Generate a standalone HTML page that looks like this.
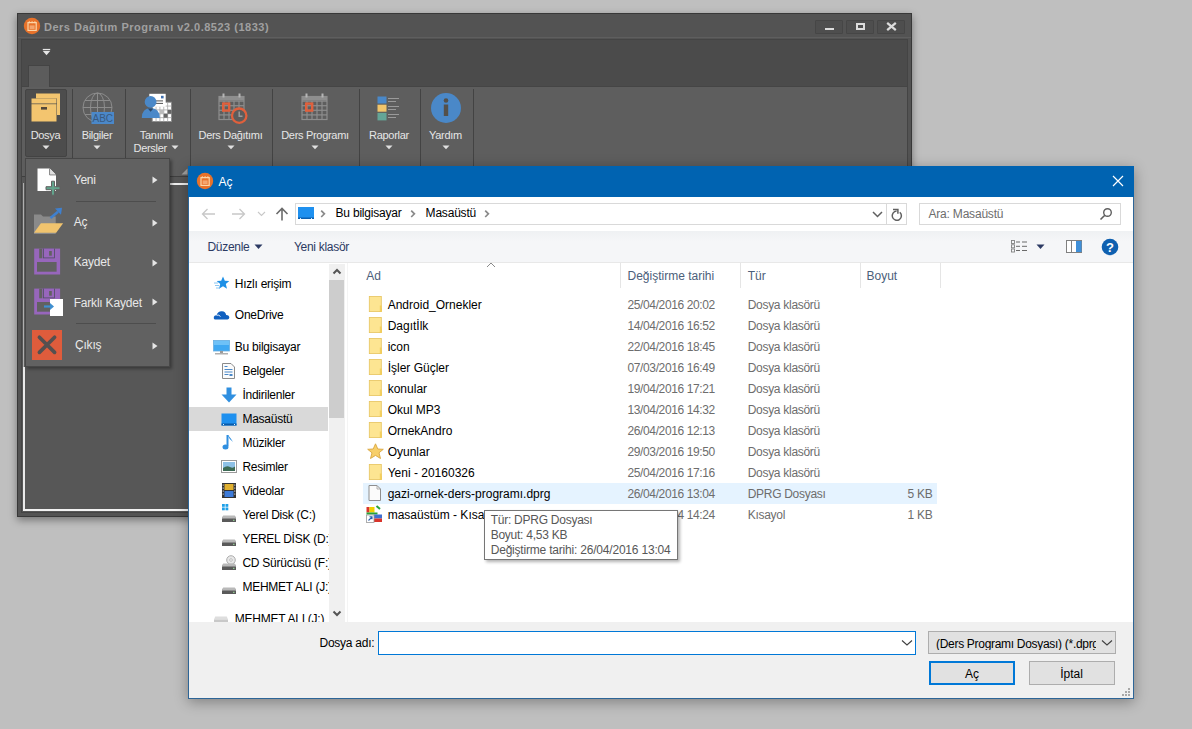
<!DOCTYPE html>
<html><head><meta charset="utf-8"><style>
html,body{margin:0;padding:0;width:1192px;height:729px;overflow:hidden;background:#bfbfbf;font-family:"Liberation Sans",sans-serif}
.a{position:absolute}
.t{white-space:nowrap}
svg{overflow:visible}
</style></head><body>
<div class="a" style="left:17px;top:13px;width:895px;height:504px;background:#535353;border:1px solid #383838;box-sizing:border-box;box-shadow:0 3px 8px rgba(0,0,0,.4)"></div>
<svg class="a" style="left:23px;top:17px" width="18" height="18" viewBox="0 0 18 18"><circle cx="9" cy="9" r="8.2" fill="#e8722a"/><rect x="5" y="5.6" width="8.2" height="7.8" fill="none" stroke="#fbd5a8" stroke-width="1.2"/><g fill="#fbd5a8"><rect x="5.8" y="4.2" width="1" height="2"/><rect x="8.6" y="4.2" width="1" height="2"/><rect x="11.4" y="4.2" width="1" height="2"/></g><rect x="6.6" y="8.4" width="5" height="3.6" fill="#f4a56e"/></svg>
<div class="a t" style="left:44px;top:22.49px;font-size:11px;line-height:11px;color:#a0a0a0;font-weight:bold;letter-spacing:0.5px">Ders Dağıtım Programı v2.0.8523 (1833)</div>
<div class="a" style="left:815px;top:20px;width:28px;height:14px;background:#4e4e4e;border:1px solid #464646;box-sizing:border-box;border-radius:1px"></div>
<div class="a" style="left:846px;top:20px;width:28px;height:14px;background:#4e4e4e;border:1px solid #464646;box-sizing:border-box;border-radius:1px"></div>
<div class="a" style="left:877px;top:20px;width:28px;height:14px;background:#4e4e4e;border:1px solid #464646;box-sizing:border-box;border-radius:1px"></div>
<div class="a" style="left:825px;top:28px;width:9px;height:2px;background:#dcdcdc"></div>
<div class="a" style="left:856px;top:23px;width:9px;height:7px;border:2px solid #dcdcdc;box-sizing:border-box"></div>
<svg class="a" style="left:886px;top:22px" width="11" height="9" viewBox="0 0 11 9"><path d="M1.2 0.8 L9.8 8.2 M9.8 0.8 L1.2 8.2" stroke="#dcdcdc" stroke-width="2.2"/></svg>
<div class="a" style="left:21px;top:39px;width:887px;height:474px;background:#575757;border:1px solid #444;box-sizing:border-box"></div>
<div class="a" style="left:22px;top:40px;width:885px;height:47px;background:#4b4b4b"></div>
<div class="a" style="left:18px;top:37px;width:893px;height:1px;background:#5e5e5e"></div>
<div class="a" style="left:22px;top:86px;width:885px;height:1px;background:#454545"></div>
<svg class="a" style="left:42px;top:48px" width="11" height="9" viewBox="0 0 11 9"><rect x="0.8" y="0.9" width="7.4" height="1.3" fill="#e6e6e6"/><path d="M0.8 3.1 L8.2 3.1 L4.5 7.2 Z" fill="#e6e6e6"/></svg>
<div class="a" style="left:28px;top:65px;width:22px;height:22px;background:#5c5c5c;border:1px solid #444;border-bottom:none;box-sizing:border-box"></div>
<div class="a" style="left:22px;top:87px;width:885px;height:89px;background:#5e5e5e"></div>
<div class="a" style="left:22px;top:176px;width:885px;height:1px;background:#404040"></div>
<div class="a" style="left:72px;top:89px;width:1px;height:88px;background:#434343"></div>
<div class="a" style="left:125px;top:89px;width:1px;height:88px;background:#434343"></div>
<div class="a" style="left:190px;top:89px;width:1px;height:88px;background:#434343"></div>
<div class="a" style="left:272px;top:89px;width:1px;height:88px;background:#434343"></div>
<div class="a" style="left:359px;top:89px;width:1px;height:88px;background:#434343"></div>
<div class="a" style="left:420px;top:89px;width:1px;height:88px;background:#434343"></div>
<div class="a" style="left:473px;top:89px;width:1px;height:88px;background:#434343"></div>
<div class="a" style="left:25px;top:89px;width:42px;height:68px;background:#4d4d4d;border:1px solid #444;box-sizing:border-box;border-radius:2px"></div>
<div class="a" style="left:23px;top:183px;width:2px;height:328px;background:#eaeaea"></div>
<div class="a" style="left:23px;top:509px;width:885px;height:2px;background:#f2f2f2"></div>
<div class="a" style="left:25px;top:183px;width:883px;height:2px;background:#f0f0f0"></div>
<svg class="a" style="left:181px;top:168px" width="8" height="8" viewBox="0 0 8 8"><path d="M6.5 0.5 L6.5 6.5 L0.5 6.5 Z" fill="#a0a0a0"/></svg>
<svg class="a" style="left:31px;top:93px" width="30" height="29" viewBox="0 0 30 29"><rect x="5" y="0.5" width="24" height="5" fill="#f3c56f"/><rect x="26" y="5" width="3" height="17" fill="#f3c56f"/><rect x="0.5" y="5.5" width="25" height="5" fill="#f3c56f"/><rect x="0.5" y="11.2" width="25" height="17.3" fill="#f3c56f"/><rect x="10" y="14" width="6" height="2.6" fill="#54483a"/></svg>
<div class="a t" style="left:-54.50px;top:130.39px;width:200px;text-align:center;font-size:11px;line-height:11px;color:#e6e6e6;letter-spacing:-0.3px">Dosya</div>
<svg class="a" style="left:41.5px;top:145px" width="8" height="5" viewBox="0 0 8 5"><path d="M0.5 0.5 L7.5 0.5 L4 4.2 Z" fill="#e0e0e0"/></svg>
<svg class="a" style="left:82px;top:92px" width="33" height="33" viewBox="0 0 33 33"><g fill="none" stroke="#8c8c8c" stroke-width="1"><circle cx="15.5" cy="15.5" r="14.5"/><ellipse cx="15.5" cy="15.5" rx="7" ry="14.5"/><line x1="15.5" y1="1" x2="15.5" y2="30"/><line x1="1" y1="15.5" x2="30" y2="15.5"/><line x1="3" y1="8.5" x2="28" y2="8.5"/><line x1="3" y1="22.5" x2="28" y2="22.5"/></g><rect x="9.5" y="20" width="22.5" height="12" fill="#4b88c9"/><text x="20.8" y="30" font-family="Liberation Sans" font-size="10" fill="#3a5a80" text-anchor="middle">ABC</text></svg>
<div class="a t" style="left:-3.00px;top:130.39px;width:200px;text-align:center;font-size:11px;line-height:11px;color:#e6e6e6;letter-spacing:-0.3px">Bilgiler</div>
<svg class="a" style="left:93px;top:145px" width="8" height="5" viewBox="0 0 8 5"><path d="M0.5 0.5 L7.5 0.5 L4 4.2 Z" fill="#e0e0e0"/></svg>
<svg class="a" style="left:141px;top:93px" width="32" height="30" viewBox="0 0 32 30"><rect x="11.2" y="9.2" width="19.3" height="19.3" fill="#fff" stroke="#8a8a8a" stroke-width="0.9"/><g stroke="#a8a8a8" stroke-width="0.8"><line x1="15.06" y1="9.2" x2="15.06" y2="28.5"/><line x1="11.2" y1="13.06" x2="30.5" y2="13.06"/><line x1="18.92" y1="9.2" x2="18.92" y2="28.5"/><line x1="11.2" y1="16.92" x2="30.5" y2="16.92"/><line x1="22.78" y1="9.2" x2="22.78" y2="28.5"/><line x1="11.2" y1="20.78" x2="30.5" y2="20.78"/><line x1="26.64" y1="9.2" x2="26.64" y2="28.5"/><line x1="11.2" y1="24.64" x2="30.5" y2="24.64"/></g><g fill="#666"><rect x="26.6" y="16.9" width="3.9" height="3.9"/><rect x="22.7" y="20.8" width="3.9" height="3.9"/><rect x="18.9" y="16.9" width="3.9" height="3.9" fill="#bbb"/></g><rect x="8.3" y="0.8" width="16.4" height="13" fill="#fff"/><rect x="20" y="2.8" width="2.6" height="2.6" fill="#3d6fb0"/><rect x="13.5" y="7.4" width="8.5" height="1" fill="#555"/><rect x="13.5" y="9.9" width="8.5" height="1" fill="#555"/><circle cx="9.6" cy="8.9" r="5.9" fill="#4a88c8"/><path d="M0.8 25 Q0.8 15.3 9.6 15.3 Q18.8 15.3 18.8 25 Z" fill="#4a88c8"/><path d="M6.8 15.6 L9.6 18.8 L12.4 15.6 Z" fill="#2d4a6a"/></svg>
<div class="a t" style="left:56.50px;top:130.39px;width:200px;text-align:center;font-size:11px;line-height:11px;color:#e6e6e6;letter-spacing:-0.3px">Tanımlı</div>
<div class="a t" style="left:133.5px;top:143.09px;font-size:11px;line-height:11px;color:#e6e6e6;letter-spacing:-0.3px">Dersler</div>
<svg class="a" style="left:170.5px;top:145px" width="8" height="5" viewBox="0 0 8 5"><path d="M0.5 0.5 L7.5 0.5 L4 4.2 Z" fill="#e0e0e0"/></svg>
<svg class="a" style="left:218px;top:93px" width="32" height="32" viewBox="0 0 32 32"><g fill="none" stroke="#8e8e8e" stroke-width="1.2"><rect x="1" y="3.5" width="25" height="23"/><line x1="1" y1="8.1" x2="26" y2="8.1"/><line x1="1" y1="12.7" x2="26" y2="12.7"/><line x1="1" y1="17.3" x2="26" y2="17.3"/><line x1="1" y1="21.9" x2="26" y2="21.9"/><line x1="6.0" y1="8" x2="6.0" y2="26.5"/><line x1="11.0" y1="8" x2="11.0" y2="26.5"/><line x1="16.0" y1="8" x2="16.0" y2="26.5"/><line x1="21.0" y1="8" x2="21.0" y2="26.5"/></g><rect x="1" y="3" width="25" height="4.5" fill="#8e8e8e"/><rect x="4.5" y="0.5" width="2" height="4" fill="#b5b5b5"/><rect x="20.5" y="0.5" width="2" height="4" fill="#b5b5b5"/><rect x="5.2" y="10.6" width="6" height="7" fill="none" stroke="#e0603c" stroke-width="2.4"/><circle cx="21.2" cy="22.7" r="7.2" fill="#5c5c5c" stroke="#e0603c" stroke-width="2.3"/><path d="M21.2 18.5 L21.2 23.2 L24.5 23.2" fill="none" stroke="#9a9a9a" stroke-width="1.5"/></svg>
<div class="a t" style="left:130.50px;top:130.39px;width:200px;text-align:center;font-size:11px;line-height:11px;color:#e6e6e6;letter-spacing:-0.3px">Ders Dağıtımı</div>
<svg class="a" style="left:226.5px;top:145px" width="8" height="5" viewBox="0 0 8 5"><path d="M0.5 0.5 L7.5 0.5 L4 4.2 Z" fill="#e0e0e0"/></svg>
<svg class="a" style="left:301px;top:93px" width="32" height="32" viewBox="0 0 32 32"><g fill="none" stroke="#8e8e8e" stroke-width="1.2"><rect x="1" y="3.5" width="25" height="23"/><line x1="1" y1="8.1" x2="26" y2="8.1"/><line x1="1" y1="12.7" x2="26" y2="12.7"/><line x1="1" y1="17.3" x2="26" y2="17.3"/><line x1="1" y1="21.9" x2="26" y2="21.9"/><line x1="6.0" y1="8" x2="6.0" y2="26.5"/><line x1="11.0" y1="8" x2="11.0" y2="26.5"/><line x1="16.0" y1="8" x2="16.0" y2="26.5"/><line x1="21.0" y1="8" x2="21.0" y2="26.5"/></g><rect x="1" y="3" width="25" height="4.5" fill="#8e8e8e"/><rect x="4.5" y="0.5" width="2" height="4" fill="#b5b5b5"/><rect x="20.5" y="0.5" width="2" height="4" fill="#b5b5b5"/><rect x="5.2" y="10.6" width="6" height="7" fill="none" stroke="#e0603c" stroke-width="2.4"/></svg>
<div class="a t" style="left:215.00px;top:130.39px;width:200px;text-align:center;font-size:11px;line-height:11px;color:#e6e6e6;letter-spacing:-0.3px">Ders Programı</div>
<svg class="a" style="left:310.6px;top:145px" width="8" height="5" viewBox="0 0 8 5"><path d="M0.5 0.5 L7.5 0.5 L4 4.2 Z" fill="#e0e0e0"/></svg>
<svg class="a" style="left:377px;top:96px" width="23" height="25" viewBox="0 0 23 25"><rect x="0.5" y="0.5" width="9" height="7" fill="#4a88c8"/><rect x="0.5" y="8.7" width="9" height="7" fill="#f1c56b"/><rect x="0.5" y="16.9" width="9" height="7.5" fill="#64a597"/><g fill="#9a9a9a"><rect x="11" y="2" width="11" height="1"/><rect x="11" y="5" width="8" height="1"/><rect x="11" y="10" width="11" height="1"/><rect x="11" y="13" width="8" height="1"/><rect x="11" y="18" width="11" height="1"/><rect x="11" y="21" width="8" height="1"/></g></svg>
<div class="a t" style="left:289.00px;top:130.39px;width:200px;text-align:center;font-size:11px;line-height:11px;color:#e6e6e6;letter-spacing:-0.3px">Raporlar</div>
<svg class="a" style="left:384.6px;top:145px" width="8" height="5" viewBox="0 0 8 5"><path d="M0.5 0.5 L7.5 0.5 L4 4.2 Z" fill="#e0e0e0"/></svg>
<svg class="a" style="left:430px;top:92px" width="32" height="32" viewBox="0 0 32 32"><circle cx="16" cy="16" r="15" fill="#4a88c8"/><circle cx="16" cy="8.5" r="2.3" fill="#54504a"/><rect x="13.8" y="12.5" width="4.4" height="11.5" fill="#54504a"/></svg>
<div class="a t" style="left:345.50px;top:130.39px;width:200px;text-align:center;font-size:11px;line-height:11px;color:#e6e6e6;letter-spacing:-0.3px">Yardım</div>
<svg class="a" style="left:441.7px;top:145px" width="8" height="5" viewBox="0 0 8 5"><path d="M0.5 0.5 L7.5 0.5 L4 4.2 Z" fill="#e0e0e0"/></svg>
<div class="a" style="left:23px;top:183px;width:1px;height:184px;background:#b0b0b0"></div>
<div class="a" style="left:24px;top:183px;width:1px;height:184px;background:#5c5c5c"></div>
<div class="a" style="left:25px;top:158px;width:145px;height:209px;background:#616161;border:1px solid #474747;box-sizing:border-box;box-shadow:2px 2px 3px rgba(0,0,0,.35)"></div>
<svg class="a" style="left:37px;top:168px" width="28" height="28" viewBox="0 0 28 28"><path d="M0.5 0.5 L12.8 0.5 L19 6.7 L19 23 L0.5 23 Z" fill="#fff"/><path d="M13.2 1.2 L13.2 6.3 L18.4 6.3 Z" fill="#e0e0e0"/><path d="M12.6 0.5 L12.6 6.9 L19 6.9" fill="none" stroke="#616161" stroke-width="0.8"/><path d="M14.5 13.2 L17.5 13.2 L17.5 18.7 L23 18.7 L23 21.7 L17.5 21.7 L17.5 27.2 L14.5 27.2 L14.5 21.7 L9 21.7 L9 18.7 L14.5 18.7 Z" fill="#62a38c" stroke="#616161" stroke-width="1"/></svg>
<div class="a t" style="left:73.7px;top:174.04px;font-size:12px;line-height:12px;color:#e8e8e8;letter-spacing:-0.2px">Yeni</div>
<svg class="a" style="left:152px;top:175.6px" width="6" height="8" viewBox="0 0 6 8"><path d="M0.5 0.5 L5.5 4 L0.5 7.5 Z" fill="#e6e6e6"/></svg>
<div class="a" style="left:76px;top:201px;width:80px;height:1px;background:#4d4d4d"></div>
<svg class="a" style="left:33px;top:207px" width="32" height="30" viewBox="0 0 32 30"><path d="M1 7.5 L8 7.5 L10 9.5 L22.7 9.5 L22.7 27 L1 27 Z" fill="#8a8a8a"/><path d="M7.9 16.3 L30.1 16.3 L23.2 25.7 L1 25.7 Z" fill="#f1c46e"/><path d="M17.5 11 L25 4.8" stroke="#3f80cf" stroke-width="2.6"/><path d="M22 1.6 L29 0.8 L28 7.8 Z" fill="#3f80cf"/></svg>
<div class="a t" style="left:73.7px;top:216.34px;font-size:12px;line-height:12px;color:#e8e8e8;letter-spacing:-0.2px">Aç</div>
<svg class="a" style="left:152px;top:218.8px" width="6" height="8" viewBox="0 0 6 8"><path d="M0.5 0.5 L5.5 4 L0.5 7.5 Z" fill="#e6e6e6"/></svg>
<svg class="a" style="left:33px;top:248px" width="28" height="28" viewBox="0 0 28 28"><rect x="1.2" y="0.6" width="25.9" height="25.9" fill="#9766bc"/><rect x="6.2" y="0.6" width="3.1" height="9.7" fill="#616161"/><rect x="10" y="0.6" width="11.8" height="9.7" fill="#4f4f60"/><rect x="10.8" y="0.6" width="10.2" height="8.9" fill="#9766bc"/><rect x="16.1" y="3" width="2.7" height="4.7" fill="#616161"/><rect x="4" y="14" width="19.6" height="9.7" fill="#616161"/></svg>
<div class="a t" style="left:73.7px;top:256.34px;font-size:12px;line-height:12px;color:#e8e8e8;letter-spacing:-0.2px">Kaydet</div>
<svg class="a" style="left:152px;top:258.5px" width="6" height="8" viewBox="0 0 6 8"><path d="M0.5 0.5 L5.5 4 L0.5 7.5 Z" fill="#e6e6e6"/></svg>
<svg class="a" style="left:33px;top:288px" width="28" height="28" viewBox="0 0 28 28"><rect x="1.2" y="0.6" width="25.9" height="25.9" fill="#9766bc"/><rect x="6.2" y="0.6" width="3.1" height="9.7" fill="#616161"/><rect x="10" y="0.6" width="11.8" height="9.7" fill="#4f4f60"/><rect x="10.8" y="0.6" width="10.2" height="8.9" fill="#9766bc"/><rect x="16.1" y="3" width="2.7" height="4.7" fill="#616161"/><rect x="4" y="14" width="19.6" height="9.7" fill="#616161"/></svg>
<svg class="a" style="left:43px;top:298px" width="22" height="19" viewBox="0 0 22 19"><rect x="7" y="1" width="13" height="17" fill="#fff"/><path d="M1 8.5 L8 8.5" stroke="#3f8fd0" stroke-width="2.2"/><path d="M7 5 L11 8.5 L7 12 Z" fill="#3f8fd0"/></svg>
<div class="a t" style="left:73.7px;top:296.64px;font-size:12px;line-height:12px;color:#e8e8e8;letter-spacing:-0.2px">Farklı Kaydet</div>
<svg class="a" style="left:152px;top:298.4px" width="6" height="8" viewBox="0 0 6 8"><path d="M0.5 0.5 L5.5 4 L0.5 7.5 Z" fill="#e6e6e6"/></svg>
<div class="a" style="left:76px;top:323px;width:80px;height:1px;background:#4d4d4d"></div>
<svg class="a" style="left:32px;top:330px" width="30" height="30" viewBox="0 0 30 30"><rect x="0" y="0" width="30" height="30" fill="#df5c3c"/><path d="M7.4 7.2 L22.6 22.4 M22.6 7.2 L7.4 22.4" stroke="#555050" stroke-width="3.7" stroke-linecap="round"/></svg>
<div class="a t" style="left:75px;top:339.34px;font-size:12px;line-height:12px;color:#e8e8e8;letter-spacing:-0.2px">Çıkış</div>
<svg class="a" style="left:152px;top:341.7px" width="6" height="8" viewBox="0 0 6 8"><path d="M0.5 0.5 L5.5 4 L0.5 7.5 Z" fill="#e6e6e6"/></svg>
<div class="a" style="left:188px;top:166px;width:946px;height:533px;background:#fff;border:1px solid #2d6597;box-sizing:border-box;box-shadow:0 3px 13px rgba(0,0,0,.33)"></div>
<div class="a" style="left:188px;top:166px;width:946px;height:31px;background:#0063b1"></div>
<svg class="a" style="left:196px;top:172px" width="18" height="18" viewBox="0 0 18 18"><circle cx="9" cy="9" r="8.2" fill="#e8722a"/><rect x="5" y="5.6" width="8.2" height="7.8" fill="none" stroke="#fbd5a8" stroke-width="1.2"/><g fill="#fbd5a8"><rect x="5.8" y="4.2" width="1" height="2"/><rect x="8.6" y="4.2" width="1" height="2"/><rect x="11.4" y="4.2" width="1" height="2"/></g><rect x="6.6" y="8.4" width="5" height="3.6" fill="#f4a56e"/></svg>
<div class="a t" style="left:218.5px;top:176.34px;font-size:12px;line-height:12px;color:#fff;">Aç</div>
<svg class="a" style="left:1112px;top:175px" width="12" height="12" viewBox="0 0 12 12"><path d="M1 1 L11 11 M11 1 L1 11" stroke="#fff" stroke-width="1.2"/></svg>
<svg class="a" style="left:201px;top:208px" width="15" height="12" viewBox="0 0 15 12"><path d="M1.5 6 L14 6 M6.5 1 L1.5 6 L6.5 11" fill="none" stroke="#c8c8c8" stroke-width="1.3"/></svg>
<svg class="a" style="left:231px;top:208px" width="15" height="12" viewBox="0 0 15 12"><path d="M13.5 6 L1 6 M8.5 1 L13.5 6 L8.5 11" fill="none" stroke="#c8c8c8" stroke-width="1.3"/></svg>
<svg class="a" style="left:257px;top:211px" width="9" height="6" viewBox="0 0 9 6"><path d="M1 1 L4.5 4.5 L8 1" fill="none" stroke="#c8c8c8" stroke-width="1.1"/></svg>
<svg class="a" style="left:275px;top:207px" width="14" height="14" viewBox="0 0 14 14"><path d="M7 13.5 L7 1.5 M1.5 7 L7 1.5 L12.5 7" fill="none" stroke="#6b6b6b" stroke-width="1.6"/></svg>
<div class="a" style="left:295px;top:203px;width:612px;height:22px;border:1px solid #d9d9d9;box-sizing:border-box;background:#fff"></div>
<div class="a" style="left:886px;top:204px;width:1px;height:20px;background:#d9d9d9"></div>
<svg class="a" style="left:297px;top:206px" width="18" height="14" viewBox="0 0 18 14"><rect x="1" y="1" width="16" height="12" fill="#1e90ef"/><rect x="1" y="11.5" width="16" height="1.5" fill="#0b5fb0"/><rect x="3" y="12" width="1" height="1" fill="#cfe8ff"/><rect x="14" y="12" width="1" height="1" fill="#cfe8ff"/></svg>
<svg class="a" style="left:320px;top:210px" width="6" height="9" viewBox="0 0 6 9"><path d="M1.2 0.6 L4.4 3.8 L1.2 7" fill="none" stroke="#8a8a8a" stroke-width="1.7"/></svg>
<div class="a t" style="left:335.5px;top:206.84px;font-size:12px;line-height:12px;color:#000;letter-spacing:-0.2px">Bu bilgisayar</div>
<svg class="a" style="left:410px;top:210px" width="6" height="9" viewBox="0 0 6 9"><path d="M1.2 0.6 L4.4 3.8 L1.2 7" fill="none" stroke="#8a8a8a" stroke-width="1.7"/></svg>
<svg class="a" style="left:484px;top:210px" width="6" height="9" viewBox="0 0 6 9"><path d="M1.2 0.6 L4.4 3.8 L1.2 7" fill="none" stroke="#8a8a8a" stroke-width="1.7"/></svg>
<div class="a t" style="left:425.6px;top:206.84px;font-size:12px;line-height:12px;color:#000;letter-spacing:-0.2px">Masaüstü</div>
<svg class="a" style="left:872px;top:211px" width="11" height="7" viewBox="0 0 11 7"><path d="M1 1 L5.5 5.5 L10 1" fill="none" stroke="#606060" stroke-width="1.5"/></svg>
<svg class="a" style="left:890px;top:207px" width="14" height="15" viewBox="0 0 14 15"><path d="M6.6 4.1 A4.6 4.6 0 1 0 9.8 5.2" fill="none" stroke="#606060" stroke-width="1.5"/><path d="M3 2.6 L7.9 2.6 L7.9 6.8" fill="none" stroke="#606060" stroke-width="1.5"/></svg>
<div class="a" style="left:919px;top:203px;width:202px;height:22px;border:1px solid #d9d9d9;box-sizing:border-box;background:#fff"></div>
<div class="a t" style="left:928.5px;top:207.84px;font-size:12px;line-height:12px;color:#6d6d6d;letter-spacing:-0.2px">Ara: Masaüstü</div>
<svg class="a" style="left:1099px;top:207px" width="14" height="14" viewBox="0 0 14 14"><circle cx="8.5" cy="5.5" r="3.8" fill="none" stroke="#606060" stroke-width="1.4"/><path d="M5.8 8.2 L1.5 12.5" stroke="#606060" stroke-width="1.6"/></svg>
<div class="a" style="left:189px;top:231px;width:944px;height:31px;background:linear-gradient(#eff1f3,#f5f6f8 35%,#f5f6f8)"></div>
<div class="a" style="left:189px;top:262px;width:944px;height:1px;background:#e8e8e8"></div>
<div class="a t" style="left:207.5px;top:240.54px;font-size:12px;line-height:12px;color:#2c3a63;letter-spacing:-0.3px">Düzenle</div>
<svg class="a" style="left:254px;top:244px" width="9" height="6" viewBox="0 0 9 6"><path d="M0.5 0.5 L8.5 0.5 L4.5 5 Z" fill="#2c3a63"/></svg>
<div class="a t" style="left:294px;top:240.54px;font-size:12px;line-height:12px;color:#2c3a63;letter-spacing:-0.3px">Yeni klasör</div>
<svg class="a" style="left:1011px;top:240px" width="17" height="13" viewBox="0 0 17 13"><g fill="none" stroke="#808080" stroke-width="0.9"><rect x="0.5" y="0.5" width="3" height="3"/><rect x="0.5" y="4.8" width="3" height="3"/><rect x="0.5" y="9" width="3" height="3"/></g><g fill="#6a6a6a"><rect x="5" y="1.5" width="4" height="1"/><rect x="11" y="1.5" width="5" height="1"/><rect x="5" y="5.8" width="4" height="1"/><rect x="11" y="5.8" width="5" height="1"/><rect x="5" y="10" width="4" height="1"/><rect x="11" y="10" width="5" height="1"/></g></svg>
<svg class="a" style="left:1036px;top:244px" width="9" height="6" viewBox="0 0 9 6"><path d="M0.5 0.5 L8.5 0.5 L4.5 5 Z" fill="#2c3a63"/></svg>
<svg class="a" style="left:1066px;top:240px" width="17" height="13" viewBox="0 0 17 13"><rect x="0.5" y="0.5" width="15" height="12" fill="#fff" stroke="#808080" stroke-width="1"/><rect x="10" y="1" width="5.5" height="11" fill="#3f8fd8"/><line x1="5.5" y1="1" x2="5.5" y2="12" stroke="#808080" stroke-width="1"/></svg>
<svg class="a" style="left:1101px;top:238px" width="18" height="18" viewBox="0 0 18 18"><circle cx="9" cy="9" r="8.3" fill="#0f60b0"/><text x="9" y="13.5" font-family="Liberation Sans" font-weight="bold" font-size="13" fill="#fff" text-anchor="middle">?</text></svg>
<div class="a" style="left:189px;top:263px;width:140px;height:359px;overflow:hidden">
<div class="a" style="left:0px;top:144px;width:139px;height:24px;background:#d9d9d9"></div>
<svg class="a" style="left:24px;top:13px" width="17" height="14" viewBox="0 0 17 14"><path d="M10 0.5 L11.8 4.8 L16.3 5 L12.8 8 L14 12.7 L10 10.2 L6 12.7 L7.2 8 L3.7 5 L8.2 4.8 Z" fill="#1e90e6"/><path d="M1 7 L5 7 M2 9.5 L6 9.5 M3 12 L7 12" stroke="#7fbff0" stroke-width="0.9"/></svg>
<div class="a t" style="left:45.80000000000001px;top:14.54px;font-size:12px;line-height:12px;color:#000;letter-spacing:-0.25px">Hızlı erişim</div>
<svg class="a" style="left:24px;top:46px" width="17" height="11" viewBox="0 0 17 11"><path d="M2 10.5 Q0.5 10.5 0.8 8 Q1.3 6 3.5 6.2 Q5 2 9 2.3 Q12.5 2.6 13.2 6 Q16.5 6.3 16.3 8.8 Q16 10.5 14.5 10.5 Z" fill="#1060c0"/><path d="M3.5 6.2 Q6 5.5 7.5 7.5" fill="none" stroke="#fff" stroke-width="0.9"/></svg>
<div class="a t" style="left:45.80000000000001px;top:46.24px;font-size:12px;line-height:12px;color:#000;letter-spacing:-0.25px">OneDrive</div>
<svg class="a" style="left:24px;top:77px" width="17" height="15" viewBox="0 0 17 15"><rect x="0.5" y="0.5" width="16" height="10.5" fill="#3fa8f2" stroke="#6aaee0" stroke-width="0.8"/><rect x="1" y="1" width="15" height="4" fill="#6ec1f7"/><rect x="7" y="11" width="3" height="2" fill="#9a9a9a"/><rect x="2" y="13" width="13" height="1.5" fill="#b0b0b0"/></svg>
<div class="a t" style="left:45.80000000000001px;top:77.94px;font-size:12px;line-height:12px;color:#000;letter-spacing:-0.25px">Bu bilgisayar</div>
<svg class="a" style="left:33px;top:100px" width="13" height="16" viewBox="0 0 13 16"><path d="M0.5 0.5 L9 0.5 L12.5 4 L12.5 15.5 L0.5 15.5 Z" fill="#fbfbfb" stroke="#8a8a8a" stroke-width="1"/><g fill="#4a88c8"><rect x="2.5" y="3" width="3" height="1"/><rect x="2.5" y="6" width="8" height="1"/><rect x="2.5" y="8.5" width="8" height="1"/><rect x="2.5" y="11" width="4" height="1"/><rect x="7.5" y="11" width="3" height="2"/></g></svg>
<div class="a t" style="left:53.400000000000006px;top:102.44px;font-size:12px;line-height:12px;color:#000;letter-spacing:-0.25px">Belgeler</div>
<svg class="a" style="left:32px;top:124px" width="16" height="16" viewBox="0 0 16 16"><rect x="5.5" y="0.5" width="5" height="8" fill="#2f8fe0"/><path d="M0.5 7.5 L15.5 7.5 L8 15.5 Z" fill="#2f8fe0"/></svg>
<div class="a t" style="left:53.400000000000006px;top:126.44px;font-size:12px;line-height:12px;color:#000;letter-spacing:-0.25px">İndirilenler</div>
<svg class="a" style="left:32px;top:150px" width="16" height="13" viewBox="0 0 16 13"><rect x="0.5" y="0.5" width="15" height="12" fill="#1e90ef"/><rect x="0.5" y="10.5" width="15" height="2" fill="#0a5aa8"/><rect x="2" y="11" width="1" height="1" fill="#d9efff"/><rect x="13" y="11" width="1" height="1" fill="#d9efff"/></svg>
<div class="a t" style="left:53.400000000000006px;top:150.44px;font-size:12px;line-height:12px;color:#000;letter-spacing:-0.25px">Masaüstü</div>
<svg class="a" style="left:33px;top:171px" width="12" height="17" viewBox="0 0 12 17"><path d="M5.5 1 L5.5 12" stroke="#2f8fe0" stroke-width="2"/><ellipse cx="3.5" cy="13" rx="3" ry="2.5" fill="#2f8fe0"/><path d="M5.5 1 Q7 5 11 8 Q9 4.5 6 1 Z" fill="#2f8fe0"/></svg>
<div class="a t" style="left:53.400000000000006px;top:174.44px;font-size:12px;line-height:12px;color:#000;letter-spacing:-0.25px">Müzikler</div>
<svg class="a" style="left:32px;top:197px" width="16" height="13" viewBox="0 0 16 13"><rect x="0.5" y="0.5" width="15" height="12" fill="#fff" stroke="#9a9a9a" stroke-width="1"/><rect x="2" y="2" width="12" height="9" fill="#8ec1e6"/><path d="M2 8 Q6 5 9 7 Q12 8.5 14 6.5 L14 11 L2 11 Z" fill="#3d6b55"/></svg>
<div class="a t" style="left:53.400000000000006px;top:198.44px;font-size:12px;line-height:12px;color:#000;letter-spacing:-0.25px">Resimler</div>
<svg class="a" style="left:33px;top:220px" width="14" height="15" viewBox="0 0 14 15"><rect x="0" y="0" width="14" height="15" fill="#333"/><rect x="2.5" y="1" width="9" height="6" fill="#e0b030"/><rect x="2.5" y="8" width="9" height="6" fill="#3d7bd9"/><g fill="#ddd"><rect x="0.7" y="1.5" width="1" height="1.2"/><rect x="0.7" y="4.5" width="1" height="1.2"/><rect x="0.7" y="7.5" width="1" height="1.2"/><rect x="0.7" y="10.5" width="1" height="1.2"/><rect x="12.3" y="1.5" width="1" height="1.2"/><rect x="12.3" y="4.5" width="1" height="1.2"/><rect x="12.3" y="7.5" width="1" height="1.2"/><rect x="12.3" y="10.5" width="1" height="1.2"/></g></svg>
<div class="a t" style="left:53.400000000000006px;top:222.44px;font-size:12px;line-height:12px;color:#000;letter-spacing:-0.25px">Videolar</div>
<svg class="a" style="left:32px;top:244px" width="16" height="16" viewBox="0 0 16 16"><g fill="#1ea0e8"><rect x="1" y="-3" width="2.8" height="2.8"/><rect x="4.5" y="-3" width="2.8" height="2.8"/><rect x="1" y="0.5" width="2.8" height="2.8"/><rect x="4.5" y="0.5" width="2.8" height="2.8"/></g><path d="M2 9 L14 9 L15 12 L15 15 L1 15 L1 12 Z" fill="#5a5a5a"/><path d="M2.2 8.5 L13.8 8.5 L15 11.5 L1 11.5 Z" fill="#b9b9b9"/><rect x="12" y="12.8" width="1.5" height="1" fill="#9be29b"/></svg>
<div class="a t" style="left:53.400000000000006px;top:246.44px;font-size:12px;line-height:12px;color:#000;letter-spacing:-0.25px">Yerel Disk (C:)</div>
<svg class="a" style="left:32px;top:268px" width="16" height="16" viewBox="0 0 16 16"><path d="M2 9 L14 9 L15 12 L15 15 L1 15 L1 12 Z" fill="#5a5a5a"/><path d="M2.2 8.5 L13.8 8.5 L15 11.5 L1 11.5 Z" fill="#b9b9b9"/><rect x="12" y="12.8" width="1.5" height="1" fill="#9be29b"/></svg>
<div class="a t" style="left:53.400000000000006px;top:270.44px;font-size:12px;line-height:12px;color:#000;letter-spacing:-0.25px">YEREL DİSK (D:)</div>
<svg class="a" style="left:32px;top:292px" width="16" height="16" viewBox="0 0 16 16"><circle cx="10" cy="5" r="4.3" fill="#e8e8e8" stroke="#9a9a9a" stroke-width="0.8"/><circle cx="10" cy="5" r="1.3" fill="#fff" stroke="#9a9a9a" stroke-width="0.6"/><path d="M2 9 L14 9 L15 12 L15 15 L1 15 L1 12 Z" fill="#5a5a5a"/><path d="M2.2 8.5 L13.8 8.5 L15 11.5 L1 11.5 Z" fill="#b9b9b9"/><rect x="12" y="12.8" width="1.5" height="1" fill="#9be29b"/></svg>
<div class="a t" style="left:53.400000000000006px;top:294.44px;font-size:12px;line-height:12px;color:#000;letter-spacing:-0.25px">CD Sürücüsü (F:)</div>
<svg class="a" style="left:32px;top:316px" width="16" height="16" viewBox="0 0 16 16"><path d="M2 9 L14 9 L15 12 L15 15 L1 15 L1 12 Z" fill="#5a5a5a"/><path d="M2.2 8.5 L13.8 8.5 L15 11.5 L1 11.5 Z" fill="#b9b9b9"/><rect x="12" y="12.8" width="1.5" height="1" fill="#9be29b"/></svg>
<div class="a t" style="left:53.400000000000006px;top:318.44px;font-size:12px;line-height:12px;color:#000;letter-spacing:-0.25px">MEHMET ALI (J:)</div>
<svg class="a" style="left:24px;top:345px" width="16" height="16" viewBox="0 0 16 16"><path d="M2.2 8.5 L13.8 8.5 L15 11.5 L1 11.5 Z" fill="#dedede"/><path d="M1 11.5 L15 11.5 L15 15 L1 15 Z" fill="#c8c8c8"/></svg>
<div class="a t" style="left:45.80000000000001px;top:349.84px;font-size:12px;line-height:12px;color:#000;letter-spacing:-0.25px">MEHMET ALI (J:)</div>
</div>
<div class="a" style="left:329px;top:264px;width:16px;height:358px;background:#f0f0f0"></div>
<div class="a" style="left:329px;top:280px;width:15px;height:138px;background:#cdcdcd"></div>
<svg class="a" style="left:332px;top:268px" width="10" height="7" viewBox="0 0 10 7"><path d="M1.5 5.5 L5 2 L8.5 5.5" fill="none" stroke="#555" stroke-width="2"/></svg>
<svg class="a" style="left:332px;top:610px" width="10" height="7" viewBox="0 0 10 7"><path d="M1.5 1.5 L5 5 L8.5 1.5" fill="none" stroke="#555" stroke-width="2"/></svg>
<div class="a" style="left:347px;top:263px;width:1px;height:359px;background:#f4f4f4"></div>
<div class="a t" style="left:366.2px;top:270.34px;font-size:12px;line-height:12px;color:#4c607a;">Ad</div>
<svg class="a" style="left:486px;top:262px" width="10" height="6" viewBox="0 0 10 6"><path d="M1 5 L5 1 L9 5" fill="none" stroke="#8a8a8a" stroke-width="1"/></svg>
<div class="a" style="left:620px;top:263px;width:1px;height:25px;background:#e5e5e5"></div>
<div class="a" style="left:740px;top:263px;width:1px;height:25px;background:#e5e5e5"></div>
<div class="a" style="left:860px;top:263px;width:1px;height:25px;background:#e5e5e5"></div>
<div class="a" style="left:940px;top:263px;width:1px;height:25px;background:#e5e5e5"></div>
<div class="a t" style="left:627.5px;top:270.34px;font-size:12px;line-height:12px;color:#4c607a;">Değiştirme tarihi</div>
<div class="a t" style="left:747.7px;top:270.34px;font-size:12px;line-height:12px;color:#4c607a;">Tür</div>
<div class="a t" style="left:866.5px;top:270.34px;font-size:12px;line-height:12px;color:#4c607a;">Boyut</div>
<div class="a" style="left:363px;top:483px;width:574px;height:21px;background:#e5f3ff"></div>
<svg class="a" style="left:368px;top:296px" width="15" height="17" viewBox="0 0 15 17"><rect x="1.3" y="0.4" width="12" height="15.2" fill="#fde592" stroke="#e6c35e" stroke-width="0.8"/><path d="M11.6 15.6 L13.7 11.5 L13.7 15.6 Z" fill="#e9c04c"/><rect x="11.8" y="9.5" width="1.9" height="6.1" fill="#f3cf5f"/></svg>
<div class="a t" style="left:387.7px;top:298.54px;font-size:12px;line-height:12px;color:#000;">Android_Ornekler</div>
<div class="a t" style="left:627.5px;top:298.54px;font-size:12px;line-height:12px;color:#6d6d6d;letter-spacing:-0.38px">25/04/2016 20:02</div>
<div class="a t" style="left:747.7px;top:298.54px;font-size:12px;line-height:12px;color:#6d6d6d;letter-spacing:-0.29px">Dosya klasörü</div>
<svg class="a" style="left:368px;top:317px" width="15" height="17" viewBox="0 0 15 17"><rect x="1.3" y="0.4" width="12" height="15.2" fill="#fde592" stroke="#e6c35e" stroke-width="0.8"/><path d="M11.6 15.6 L13.7 11.5 L13.7 15.6 Z" fill="#e9c04c"/><rect x="11.8" y="9.5" width="1.9" height="6.1" fill="#f3cf5f"/></svg>
<div class="a t" style="left:387.7px;top:319.54px;font-size:12px;line-height:12px;color:#000;">Dagıtİlk</div>
<div class="a t" style="left:627.5px;top:319.54px;font-size:12px;line-height:12px;color:#6d6d6d;letter-spacing:-0.38px">14/04/2016 16:52</div>
<div class="a t" style="left:747.7px;top:319.54px;font-size:12px;line-height:12px;color:#6d6d6d;letter-spacing:-0.29px">Dosya klasörü</div>
<svg class="a" style="left:368px;top:338px" width="15" height="17" viewBox="0 0 15 17"><rect x="1.3" y="0.4" width="12" height="15.2" fill="#fde592" stroke="#e6c35e" stroke-width="0.8"/><path d="M11.6 15.6 L13.7 11.5 L13.7 15.6 Z" fill="#e9c04c"/><rect x="11.8" y="9.5" width="1.9" height="6.1" fill="#f3cf5f"/></svg>
<div class="a t" style="left:387.7px;top:340.54px;font-size:12px;line-height:12px;color:#000;">icon</div>
<div class="a t" style="left:627.5px;top:340.54px;font-size:12px;line-height:12px;color:#6d6d6d;letter-spacing:-0.38px">22/04/2016 18:45</div>
<div class="a t" style="left:747.7px;top:340.54px;font-size:12px;line-height:12px;color:#6d6d6d;letter-spacing:-0.29px">Dosya klasörü</div>
<svg class="a" style="left:368px;top:359px" width="15" height="17" viewBox="0 0 15 17"><rect x="1.3" y="0.4" width="12" height="15.2" fill="#fde592" stroke="#e6c35e" stroke-width="0.8"/><path d="M11.6 15.6 L13.7 11.5 L13.7 15.6 Z" fill="#e9c04c"/><rect x="11.8" y="9.5" width="1.9" height="6.1" fill="#f3cf5f"/></svg>
<div class="a t" style="left:387.7px;top:361.54px;font-size:12px;line-height:12px;color:#000;">İşler Güçler</div>
<div class="a t" style="left:627.5px;top:361.54px;font-size:12px;line-height:12px;color:#6d6d6d;letter-spacing:-0.38px">07/03/2016 16:49</div>
<div class="a t" style="left:747.7px;top:361.54px;font-size:12px;line-height:12px;color:#6d6d6d;letter-spacing:-0.29px">Dosya klasörü</div>
<svg class="a" style="left:368px;top:380px" width="15" height="17" viewBox="0 0 15 17"><rect x="1.3" y="0.4" width="12" height="15.2" fill="#fde592" stroke="#e6c35e" stroke-width="0.8"/><path d="M11.6 15.6 L13.7 11.5 L13.7 15.6 Z" fill="#e9c04c"/><rect x="11.8" y="9.5" width="1.9" height="6.1" fill="#f3cf5f"/></svg>
<div class="a t" style="left:387.7px;top:382.54px;font-size:12px;line-height:12px;color:#000;">konular</div>
<div class="a t" style="left:627.5px;top:382.54px;font-size:12px;line-height:12px;color:#6d6d6d;letter-spacing:-0.38px">19/04/2016 17:21</div>
<div class="a t" style="left:747.7px;top:382.54px;font-size:12px;line-height:12px;color:#6d6d6d;letter-spacing:-0.29px">Dosya klasörü</div>
<svg class="a" style="left:368px;top:401px" width="15" height="17" viewBox="0 0 15 17"><rect x="1.3" y="0.4" width="12" height="15.2" fill="#fde592" stroke="#e6c35e" stroke-width="0.8"/><path d="M11.6 15.6 L13.7 11.5 L13.7 15.6 Z" fill="#e9c04c"/><rect x="11.8" y="9.5" width="1.9" height="6.1" fill="#f3cf5f"/></svg>
<div class="a t" style="left:387.7px;top:403.54px;font-size:12px;line-height:12px;color:#000;">Okul MP3</div>
<div class="a t" style="left:627.5px;top:403.54px;font-size:12px;line-height:12px;color:#6d6d6d;letter-spacing:-0.38px">13/04/2016 14:32</div>
<div class="a t" style="left:747.7px;top:403.54px;font-size:12px;line-height:12px;color:#6d6d6d;letter-spacing:-0.29px">Dosya klasörü</div>
<svg class="a" style="left:368px;top:422px" width="15" height="17" viewBox="0 0 15 17"><rect x="1.3" y="0.4" width="12" height="15.2" fill="#fde592" stroke="#e6c35e" stroke-width="0.8"/><path d="M11.6 15.6 L13.7 11.5 L13.7 15.6 Z" fill="#e9c04c"/><rect x="11.8" y="9.5" width="1.9" height="6.1" fill="#f3cf5f"/></svg>
<div class="a t" style="left:387.7px;top:424.54px;font-size:12px;line-height:12px;color:#000;">OrnekAndro</div>
<div class="a t" style="left:627.5px;top:424.54px;font-size:12px;line-height:12px;color:#6d6d6d;letter-spacing:-0.38px">26/04/2016 12:13</div>
<div class="a t" style="left:747.7px;top:424.54px;font-size:12px;line-height:12px;color:#6d6d6d;letter-spacing:-0.29px">Dosya klasörü</div>
<svg class="a" style="left:367px;top:443px" width="17" height="17" viewBox="0 0 17 17"><path d="M8.5 0.8 L10.8 6 L16.3 6.3 L12 9.8 L13.5 15.5 L8.5 12.4 L3.5 15.5 L5 9.8 L0.7 6.3 L6.2 6 Z" fill="#f7cf6a" stroke="#d9a640" stroke-width="0.9"/></svg>
<div class="a t" style="left:387.7px;top:445.54px;font-size:12px;line-height:12px;color:#000;">Oyunlar</div>
<div class="a t" style="left:627.5px;top:445.54px;font-size:12px;line-height:12px;color:#6d6d6d;letter-spacing:-0.38px">29/03/2016 19:50</div>
<div class="a t" style="left:747.7px;top:445.54px;font-size:12px;line-height:12px;color:#6d6d6d;letter-spacing:-0.29px">Dosya klasörü</div>
<svg class="a" style="left:368px;top:464px" width="15" height="17" viewBox="0 0 15 17"><rect x="1.3" y="0.4" width="12" height="15.2" fill="#fde592" stroke="#e6c35e" stroke-width="0.8"/><path d="M11.6 15.6 L13.7 11.5 L13.7 15.6 Z" fill="#e9c04c"/><rect x="11.8" y="9.5" width="1.9" height="6.1" fill="#f3cf5f"/></svg>
<div class="a t" style="left:387.7px;top:466.54px;font-size:12px;line-height:12px;color:#000;">Yeni - 20160326</div>
<div class="a t" style="left:627.5px;top:466.54px;font-size:12px;line-height:12px;color:#6d6d6d;letter-spacing:-0.38px">25/04/2016 17:16</div>
<div class="a t" style="left:747.7px;top:466.54px;font-size:12px;line-height:12px;color:#6d6d6d;letter-spacing:-0.29px">Dosya klasörü</div>
<svg class="a" style="left:368px;top:485px" width="14" height="16" viewBox="0 0 14 16"><path d="M1 0.5 L9 0.5 L12.5 4 L12.5 15.5 L1 15.5 Z" fill="#fbfbfb" stroke="#8f8f8f" stroke-width="1"/><path d="M9 0.5 L9 4 L12.5 4" fill="none" stroke="#a0a0a0" stroke-width="0.8"/></svg>
<div class="a t" style="left:387.7px;top:487.54px;font-size:12px;line-height:12px;color:#000;">gazi-ornek-ders-programı.dprg</div>
<div class="a t" style="left:627.5px;top:487.54px;font-size:12px;line-height:12px;color:#6d6d6d;letter-spacing:-0.38px">26/04/2016 13:04</div>
<div class="a t" style="left:747.7px;top:487.54px;font-size:12px;line-height:12px;color:#6d6d6d;letter-spacing:-0.29px">DPRG Dosyası</div>
<div class="a t" style="left:732.50px;top:487.54px;width:200px;text-align:right;font-size:12px;line-height:12px;color:#6d6d6d;letter-spacing:-0.25px">5 KB</div>
<svg class="a" style="left:366px;top:505px" width="18" height="19" viewBox="0 0 18 19"><rect x="0.5" y="2" width="3" height="5.5" fill="#d9342b"/><rect x="3.5" y="2" width="5" height="5.5" fill="#f0d000"/><rect x="0.5" y="7.5" width="11" height="2" fill="#27a33a"/><path d="M10.5 1 L14 4" stroke="#27a33a" stroke-width="2"/><rect x="8" y="9.5" width="8" height="4" fill="#3e6fd0"/><rect x="8" y="13.5" width="8" height="3.5" fill="#d9342b"/><rect x="0.5" y="10" width="7.5" height="7.5" fill="#fff" stroke="#9a9a9a" stroke-width="0.8"/><path d="M2.5 15.5 L6 12 M3.5 11.8 L6 11.8 L6 14.3" fill="none" stroke="#2a60b0" stroke-width="1.1"/></svg>
<div class="a t" style="left:387.7px;top:508.54px;font-size:12px;line-height:12px;color:#000;">masaüstüm - Kısayol</div>
<div class="a t" style="left:627.5px;top:508.54px;font-size:12px;line-height:12px;color:#6d6d6d;letter-spacing:-0.38px">26/04/2014 14:24</div>
<div class="a t" style="left:747.7px;top:508.54px;font-size:12px;line-height:12px;color:#6d6d6d;letter-spacing:-0.29px">Kısayol</div>
<div class="a t" style="left:732.50px;top:508.54px;width:200px;text-align:right;font-size:12px;line-height:12px;color:#6d6d6d;letter-spacing:-0.25px">1 KB</div>
<div class="a" style="left:484px;top:510px;width:194px;height:50px;background:#fff;border:1px solid #767676;box-sizing:border-box;box-shadow:2px 2px 3px rgba(0,0,0,.3)"></div>
<div class="a t" style="left:490.7px;top:514.44px;font-size:12px;line-height:12px;color:#575757;letter-spacing:-0.25px">Tür: DPRG Dosyası</div>
<div class="a t" style="left:490.7px;top:529.24px;font-size:12px;line-height:12px;color:#575757;letter-spacing:-0.25px">Boyut: 4,53 KB</div>
<div class="a t" style="left:490.7px;top:543.94px;font-size:12px;line-height:12px;color:#575757;letter-spacing:-0.2px">Değiştirme tarihi: 26/04/2016 13:04</div>
<div class="a" style="left:189px;top:622px;width:944px;height:76px;background:#f0f0f0"></div>
<div class="a t" style="left:319.5px;top:637.34px;font-size:12px;line-height:12px;color:#000;letter-spacing:-0.25px">Dosya adı:</div>
<div class="a" style="left:378px;top:631px;width:538px;height:24px;background:#fff;border:1px solid #0078d7;box-sizing:border-box"></div>
<svg class="a" style="left:901px;top:639px" width="12" height="8" viewBox="0 0 12 8"><path d="M1 1.5 L6 6 L11 1.5" fill="none" stroke="#404040" stroke-width="1.1"/></svg>
<div class="a" style="left:928px;top:631px;width:188px;height:23px;background:#e1e1e1;border:1px solid #adadad;box-sizing:border-box;overflow:hidden">
<div class="a t" style="left:7px;top:5.54px;font-size:12px;line-height:12px;color:#000;letter-spacing:-0.3px;width:160px;overflow:hidden;white-space:nowrap">(Ders Programı Dosyası) (*.dprg)</div>
</div>
<svg class="a" style="left:1101px;top:639px" width="12" height="8" viewBox="0 0 12 8"><path d="M1 1.5 L6 6 L11 1.5" fill="none" stroke="#404040" stroke-width="1.1"/></svg>
<div class="a" style="left:929px;top:661px;width:86px;height:24px;background:#e1e1e1;border:2px solid #0078d7;box-sizing:border-box"></div>
<div class="a t" style="left:872.00px;top:667.84px;width:200px;text-align:center;font-size:12px;line-height:12px;color:#000;">Aç</div>
<div class="a" style="left:1029px;top:661px;width:86px;height:24px;background:#e1e1e1;border:1px solid #adadad;box-sizing:border-box"></div>
<div class="a t" style="left:971.50px;top:667.84px;width:200px;text-align:center;font-size:12px;line-height:12px;color:#000;">İptal</div>
<div class="a" style="left:1128px;top:688px;width:2px;height:2px;background:#a8a8a8"></div>
<div class="a" style="left:1125px;top:691px;width:2px;height:2px;background:#a8a8a8"></div>
<div class="a" style="left:1128px;top:691px;width:2px;height:2px;background:#a8a8a8"></div>
<div class="a" style="left:1122px;top:694px;width:2px;height:2px;background:#a8a8a8"></div>
<div class="a" style="left:1125px;top:694px;width:2px;height:2px;background:#a8a8a8"></div>
<div class="a" style="left:1128px;top:694px;width:2px;height:2px;background:#a8a8a8"></div>
</body></html>
